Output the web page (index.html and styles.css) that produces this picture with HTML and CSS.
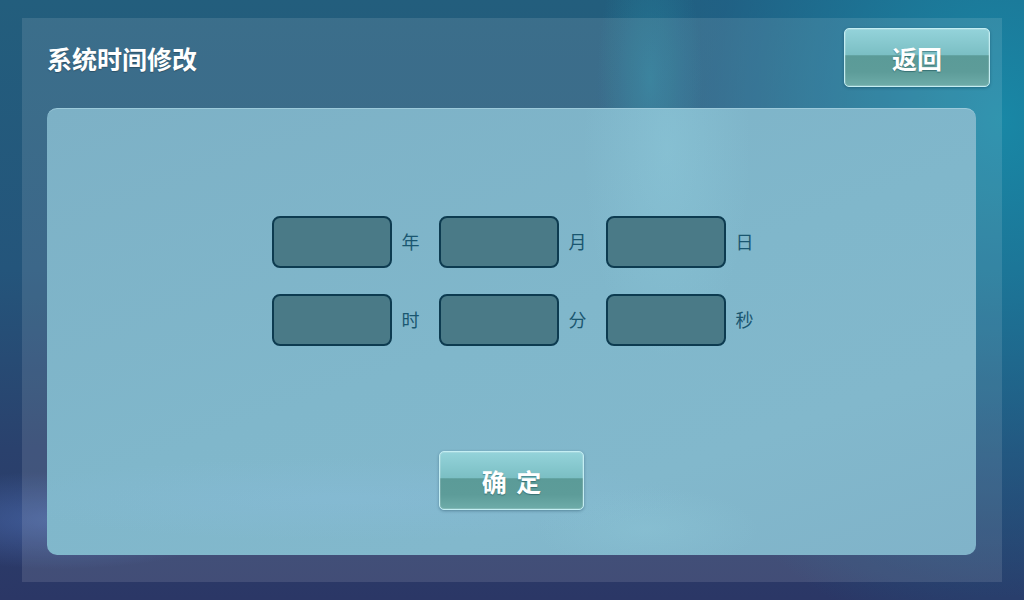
FILE: index.html
```html
<!DOCTYPE html>
<html lang="zh-CN">
<head>
    <meta charset="UTF-8">
    <meta name="viewport" content="width=device-width, initial-scale=1.0">
    <title>系统时间修改</title>
    <link rel="stylesheet" href="styles.css">
</head>
<body>
    <div class="frame">
        <div class="header">
            <h1>系统时间修改</h1>
            <button class="btn btn-back">返回</button>
        </div>

        <div class="panel">
            <div class="fields">
                <div class="field"><input type="text" id="year"><span>年</span></div>
                <div class="field"><input type="text" id="month"><span>月</span></div>
                <div class="field"><input type="text" id="day"><span>日</span></div>
                <div class="field"><input type="text" id="hour"><span>时</span></div>
                <div class="field"><input type="text" id="minute"><span>分</span></div>
                <div class="field"><input type="text" id="second"><span>秒</span></div>
            </div>

            <button class="btn btn-ok">确 定</button>
        </div>
    </div>
</body>
</html>
```

FILE: styles.css
```css
* {
    margin: 0;
    padding: 0;
    box-sizing: border-box;
}

body {
    font-family: 'Noto Sans CJK SC', 'Noto Sans', sans-serif;
    width: 1024px;
    height: 600px;
    overflow: hidden;
    padding: 18px 22px;
    background:
        radial-gradient(ellipse 70px 200px at 650px 80px, rgba(40, 160, 180, 0.35), transparent 75%),
        radial-gradient(ellipse 260px 70px at 60px 520px, rgba(90, 130, 210, 0.45), transparent 70%),
        radial-gradient(ellipse 480px 620px at 1000px 120px, rgba(24, 138, 168, 0.95), rgba(30, 100, 140, 0.5) 60%, transparent 85%),
        linear-gradient(to bottom, #235e7d 0%, #24557b 45%, #2a416d 75%, #2b3766 100%);
}

.frame {
    width: 980px;
    height: 564px;
    padding: 0 12px 27px 25px;
    background: rgba(255, 255, 255, 0.11);
    display: flex;
    flex-direction: column;
}

.header {
    height: 90px;
    padding-top: 10px;
    padding-bottom: 21px;
    display: flex;
    justify-content: space-between;
    align-items: center;
}

h1 {
    color: #fff;
    font-size: 25px;
    font-weight: bold;
    text-shadow: 0 1px 1px rgba(0, 0, 0, 0.25);
}

.btn {
    width: 146px;
    height: 59px;
    border: 1px solid #c4eef3;
    border-radius: 5px;
    background: linear-gradient(to bottom, #94d3da 0%, #7bbfc4 45%, #5b9b98 47%, #5d9c99 75%, #6eaca9 100%);
    box-shadow: 0 1px 3px rgba(0, 40, 60, 0.35), inset 0 0 0 1px rgba(255, 255, 255, 0.15);
    color: #fff;
    font-family: inherit;
    font-size: 25px;
    font-weight: bold;
    text-shadow: 0 1px 1px rgba(0, 50, 60, 0.4);
    cursor: pointer;
}

.panel {
    flex: 1;
    margin-right: 14px;
    border-radius: 10px;
    border-top: 1px solid #9ccadb;
    background:
        radial-gradient(ellipse 120px 300px at 620px 40px, rgba(150, 215, 230, 0.3), transparent 70%),
        radial-gradient(ellipse 160px 60px at 600px 420px, rgba(150, 210, 225, 0.25), transparent 70%),
        radial-gradient(ellipse 500px 60px at 300px 390px, rgba(140, 190, 225, 0.3), transparent 70%),
        linear-gradient(160deg, #7db1c6 0%, #80b7cb 50%, #82b8cc 75%, #80b3c9 100%);
    display: flex;
    flex-direction: column;
    align-items: center;
    padding-top: 107px;
}

.fields {
    display: grid;
    grid-template-columns: repeat(3, 148px);
    column-gap: 19px;
    row-gap: 26px;
    margin-left: 2px;
}

.field {
    display: flex;
    align-items: center;
    gap: 10px;
}

.field input {
    width: 120px;
    height: 52px;
    border: 2px solid #0d3b50;
    border-radius: 8px;
    background: #4a7a87;
    color: #fff;
    font-size: 20px;
    text-align: center;
    outline: none;
}

.field span {
    font-size: 18px;
    color: #1a5670;
    margin-top: -3px;
}

.btn-ok {
    margin-top: 105px;
    width: 145px;
    letter-spacing: 2px;
    text-indent: 2px;
}
```
